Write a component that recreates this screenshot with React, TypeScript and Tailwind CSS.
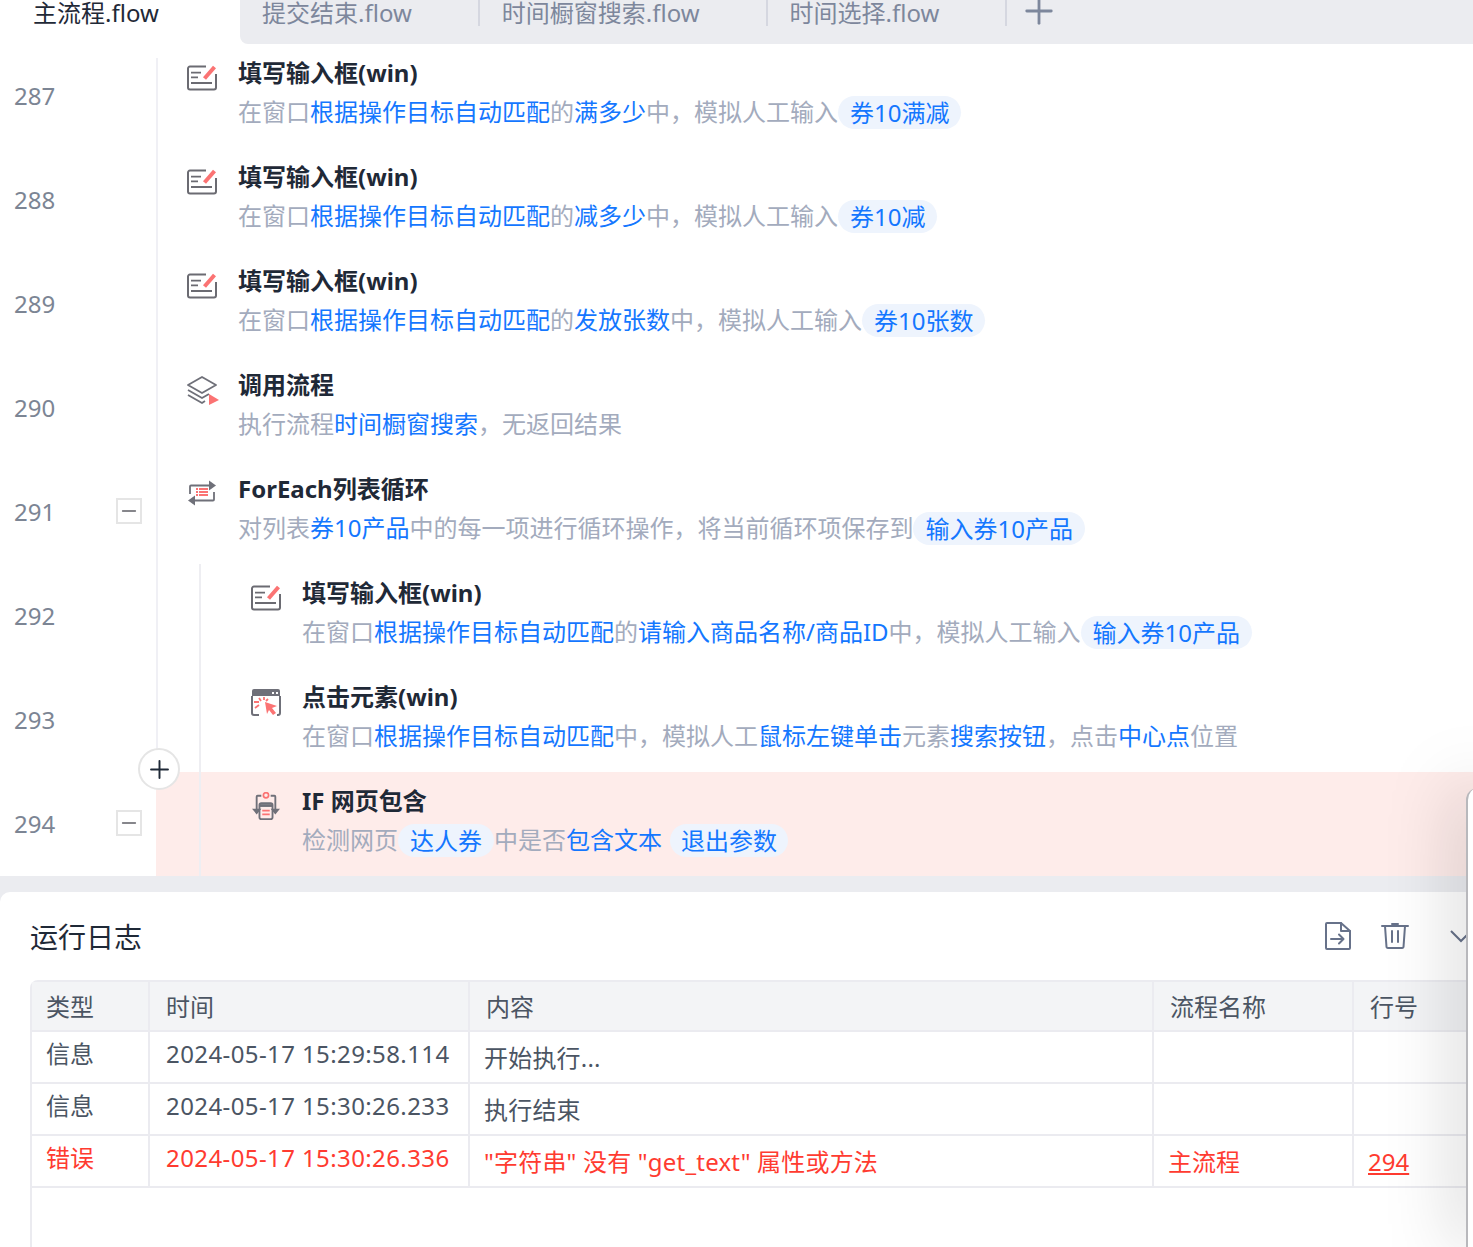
import { Minus, Plus } from 'lucide-react'

type Seg = { k: 't' | 'b' | 'c' | 'g'; s: string }
const t = (s: string): Seg => ({ k: 't', s })
const b = (s: string): Seg => ({ k: 'b', s })
const c = (s: string): Seg => ({ k: 'c', s })
const g = (s: string): Seg => ({ k: 'g', s })

const FONT = "font-['Noto_Sans','Noto_Sans_CJK_SC',sans-serif]"

function EditIcon() {
  return (
    <svg width="30" height="30" viewBox="0 0 30 30" fill="none">
      <path d="M19 3.500H3a2 2 0 0 0-2 2v19a2 2 0 0 0 2 2h24a2 2 0 0 0 2-2V11" stroke="#6b6b72" strokeWidth="2" />
      <path d="M4 9.700h10M4 14.300h7M4 20h21" stroke="#6b6b72" strokeWidth="1.800" />
      <path d="M17.500 15.500L27.500 4" stroke="#fb7373" strokeWidth="4" />
    </svg>
  )
}

function FlowIcon() {
  return (
    <svg width="32" height="32" viewBox="0 0 32 32" fill="none">
      <path d="M15 2L29 10 15 18 1 10z" stroke="#6f7079" strokeWidth="1.800" strokeLinejoin="round" />
      <path d="M1 15l14 8 7-4M1 20l14 8 3-2" stroke="#6f7079" strokeWidth="1.800" strokeLinejoin="round" />
      <path d="M22 19l10 6-10 5z" fill="#fb7373" />
    </svg>
  )
}

function LoopIcon() {
  return (
    <svg width="30" height="30" viewBox="0 0 30 30" fill="none">
      <path d="M3 15V7.500a1 1 0 0 1 1-1h22" stroke="#6f7079" strokeWidth="1.800" />
      <path d="M22 1.500l7 5-7 5z" fill="#6f7079" />
      <path d="M27 13v7.500a1 1 0 0 1-1 1H5" stroke="#6f7079" strokeWidth="1.800" />
      <path d="M8 16.500l-7 5 7 5z" fill="#6f7079" />
      <path d="M9 9h2v2H9zM9 12h2v2H9zM9 15h2v2H9zM12 9h9v2h-9zM12 12h9v2h-9zM12 15h9v2h-9z" fill="#fb7373" />
    </svg>
  )
}

function ClickIcon() {
  return (
    <svg width="30" height="30" viewBox="0 0 30 30" fill="none">
      <path d="M3 2h24a2 2 0 0 1 2 2v5H1V4a2 2 0 0 1 2-2z" fill="#6f7079" />
      <path d="M21 5h2v2h-2zM25 5h2v2h-2z" fill="#fff" />
      <path d="M1 9v17a2 2 0 0 0 2 2h5M29 9v17a2 2 0 0 1-2 2h-1" stroke="#6f7079" strokeWidth="2" />
      <path d="M14 15l12 4-5 2 4 5-3 2-4-5-2 4z" fill="#fb7373" />
      <path d="M8 11l2 3M13 10v3M3 15h5M4 21l4-3M17 12l-2 2" stroke="#fb7373" strokeWidth="1.800" />
    </svg>
  )
}

function IfIcon() {
  return (
    <svg className="ml-[1px] mt-[1px]" width="28" height="28" viewBox="0 0 30 30" fill="none">
      <circle cx="15" cy="3.500" r="2.800" stroke="#fb7373" strokeWidth="1.800" />
      <path d="M10 4H6a1 1 0 0 0-1 1v14M20 4h4a1 1 0 0 1 1 1v14" stroke="#6f7079" strokeWidth="2" />
      <path d="M0 18h10l-5 6zM20 18h10l-5 6z" fill="#6f7079" />
      <rect x="8" y="12" width="14" height="17" rx="2" stroke="#6f7079" strokeWidth="2" />
      <path d="M8 14.500h14" stroke="#6f7079" strokeWidth="3" />
      <path d="M11 20h8M11 24h8" stroke="#fb7373" strokeWidth="1.800" />
    </svg>
  )
}

const rows = [
  { n: 287, icon: <EditIcon />, title: '填写输入框(win)', depth: 0, desc: [t('在窗口'), b('根据操作目标自动匹配'), t('的'), b('满多少'), t('中，模拟人工输入'), c('券10满减')] },
  { n: 288, icon: <EditIcon />, title: '填写输入框(win)', depth: 0, desc: [t('在窗口'), b('根据操作目标自动匹配'), t('的'), b('减多少'), t('中，模拟人工输入'), c('券10减')] },
  { n: 289, icon: <EditIcon />, title: '填写输入框(win)', depth: 0, desc: [t('在窗口'), b('根据操作目标自动匹配'), t('的'), b('发放张数'), t('中，模拟人工输入'), c('券10张数')] },
  { n: 290, icon: <FlowIcon />, title: '调用流程', depth: 0, desc: [t('执行流程'), b('时间橱窗搜索'), t('，无返回结果')] },
  { n: 291, icon: <LoopIcon />, title: 'ForEach列表循环', depth: 0, fold: true, desc: [t('对列表'), b('券10产品'), t('中的每一项进行循环操作，将当前循环项保存到'), c('输入券10产品')] },
  { n: 292, icon: <EditIcon />, title: '填写输入框(win)', depth: 1, desc: [t('在窗口'), b('根据操作目标自动匹配'), t('的'), b('请输入商品名称/商品ID'), t('中，模拟人工输入'), c('输入券10产品')] },
  { n: 293, icon: <ClickIcon />, title: '点击元素(win)', depth: 1, desc: [t('在窗口'), b('根据操作目标自动匹配'), t('中，模拟人工'), b('鼠标左键单击'), t('元素'), b('搜索按钮'), t('，点击'), b('中心点'), t('位置')] },
  { n: 294, icon: <IfIcon />, title: 'IF 网页包含', depth: 1, fold: true, error: true, desc: [t('检测网页'), c('达人券'), t('中是否'), b('包含文本'), g('退出参数')] },
]

function Desc({ segs }: { segs: Seg[] }) {
  return (
    <div className="text-[24px] leading-[40px] whitespace-nowrap text-[#a3abbd]">
      {segs.map((seg, i) => {
        if (seg.k === 'b') return <span key={i} className="text-[#1477ff]">{seg.s}</span>
        if (seg.k === 'c') {
          return (
            <span key={i} className="inline-block align-top mt-[4px] h-[33px] px-[12px] rounded-full bg-[#eef4fd] text-[#1477ff] leading-[34px]">
              {seg.s}
            </span>
          )
        }
        if (seg.k === 'g') {
          return (
            <span key={i} className="inline-block align-top ml-[8px] mt-[4px] h-[33px] px-[11px] rounded-full bg-[#eef4fd] text-[#1477ff] leading-[34px]">
              {seg.s}
            </span>
          )
        }
        return <span key={i}>{seg.s}</span>
      })}
    </div>
  )
}

function FlowRow({ row }: { row: (typeof rows)[number] }) {
  return (
    <div className="flex h-[104px] shrink-0">
      <div className="w-[156px] shrink-0 flex items-center justify-between pb-[2px] pl-[14px] pr-[14px] text-[24px] text-[#7c8594]">
        <span className="translate-y-[1px]">{row.n}</span>
        {row.fold && (
          <span className="w-[26px] h-[26px] border-2 border-[#e5e5e5] flex items-center justify-center text-[#5f5f66]">
            <Minus size={24} strokeWidth={1.6} />
          </span>
        )}
      </div>
      <div className={`flex-1 flex border-l-2 ${row.error ? 'bg-[#feecea] border-[#feecea]' : 'border-[#f0f0f5]'}`}>
        {row.depth > 0 && <div className="w-[43px] shrink-0 border-r-2 border-[#eeeef2]" />}
        <div className={`${row.depth > 0 ? 'pl-[50px]' : 'pl-[29px]'} pt-[19px] w-[50px] shrink-0 box-content`}>
          {row.icon}
        </div>
        <div className="pl-[1px] pt-[11px]">
          <div className="text-[24px] leading-[36px] mb-[1px] font-bold text-[#1f2937]">{row.title}</div>
          <Desc segs={row.desc} />
        </div>
      </div>
    </div>
  )
}

const logs = [
  { type: '信息', time: '2024-05-17 15:29:58.114', msg: '开始执行...', flow: '', line: '' },
  { type: '信息', time: '2024-05-17 15:30:26.233', msg: '执行结束', flow: '', line: '' },
  { type: '错误', time: '2024-05-17 15:30:26.336', msg: '"字符串" 没有 "get_text" 属性或方法', flow: '主流程', line: '294', error: true },
]

const tabs = ['提交结束.flow', '时间橱窗搜索.flow', '时间选择.flow']
const cols = 'grid grid-cols-[118px_320px_684px_200px_1fr]'

export default function App() {
  return (
    <div className={`relative w-[1473px] h-[1247px] overflow-hidden flex flex-col bg-white ${FONT}`}>
      <div className="flex h-[44px] shrink-0">
        <div className="w-[240px] pl-[33px] text-[24px] leading-[26px] text-[#1f2937]">主流程.flow</div>
        <div className="flex-1 flex items-start bg-[#ebecf0] rounded-bl-[8px]">
          {tabs.map((name) => (
            <div key={name} className="h-[26px] pl-[22px] pr-[66px] border-r-2 border-[#d5d7e0] text-[24px] leading-[26px] text-[#7d879c] whitespace-nowrap">
              {name}
            </div>
          ))}
          <Plus size={42} strokeWidth={1.6} className="ml-[11px] -mt-[10px] text-[#7d879c]" />
        </div>
      </div>

      <div className="relative h-[832px] shrink-0 pt-[14px]">
        <div className="h-[818px] overflow-hidden">
          <div className="-mt-[14px] flex flex-col">
            {rows.map((row) => (
              <FlowRow key={row.n} row={row} />
            ))}
          </div>
        </div>
        <span className="absolute left-[138px] top-[704px] w-[42px] h-[42px] rounded-full border-2 border-[#e5e5e5] bg-white flex items-center justify-center text-[#1f2937]">
          <Plus size={29} strokeWidth={1.6} />
        </span>
      </div>

      <div className="flex-1 bg-[#ebecf0] pt-[16px] flex flex-col min-h-0">
        <div className="flex-1 bg-white rounded-tl-[10px] flex flex-col min-h-0">
          <div className="h-[88px] shrink-0 flex items-center pl-[30px] pr-[1px]">
            <span className="text-[28px] text-[#1f2937] mt-[2px]">运行日志</span>
            <svg className="ml-auto" width="28" height="30" viewBox="0 0 28 30" fill="none" stroke="#67728a" strokeWidth="2" strokeLinejoin="round" strokeLinecap="round">
              <path d="M3 2h14l9 8v17a1 1 0 0 1-1 1H3a1 1 0 0 1-1-1V3a1 1 0 0 1 1-1z" />
              <path d="M17 2v8h9" />
              <path d="M7 18h12M15 13.500l4.500 4.500-4.500 4.500" />
            </svg>
            <svg className="ml-[29px]" width="28" height="28" viewBox="0 0 28 28" fill="none" stroke="#67728a" strokeWidth="2" strokeLinecap="round" strokeLinejoin="round">
              <path d="M1 4h26M11 2h6" />
              <path d="M4 4l1.500 21a2 2 0 0 0 2 1h13a2 2 0 0 0 2-1L24 4" />
              <path d="M11 9v11M17 9v11" />
            </svg>
            <svg className="ml-[41px]" width="22" height="14" viewBox="0 0 22 14" fill="none" stroke="#67728a" strokeWidth="2">
              <path d="M1 2l10 10 10-10" />
            </svg>
          </div>

          <div className="ml-[30px] flex-1 border-l-2 border-t-2 border-[#ebebf0] rounded-tl-[8px] text-[24px]">
            <div className={`${cols} h-[50px] bg-[#f3f4f6] border-b-2 border-[#ebebf0] text-[#4b5563]`}>
              <div className="pl-[14px] border-r-2 border-[#ebebf0] leading-[49px]">类型</div>
              <div className="pl-[16px] border-r-2 border-[#ebebf0] leading-[49px]">时间</div>
              <div className="pl-[16px] border-r-2 border-[#ebebf0] leading-[49px]">内容</div>
              <div className="pl-[16px] border-r-2 border-[#ebebf0] leading-[49px]">流程名称</div>
              <div className="pl-[16px] leading-[49px]">行号</div>
            </div>
            {logs.map((log) => (
              <div key={log.time} className={`${cols} h-[52px] border-b-2 border-[#ebebf0] ${log.error ? 'text-[#ff3b30]' : 'text-[#4b5563]'}`}>
                <div className="pl-[14px] border-r-2 border-[#ebebf0] leading-[44px]">{log.type}</div>
                <div className="pl-[16px] border-r-2 border-[#ebebf0] leading-[44px] tracking-[0.4px]">{log.time}</div>
                <div className="pl-[14px] border-r-2 border-[#ebebf0] leading-[52px] tracking-[0.2px]">{log.msg}</div>
                <div className="pl-[14px] border-r-2 border-[#ebebf0] leading-[52px]">{log.flow}</div>
                <div className="pl-[14px] leading-[52px] underline">{log.line}</div>
              </div>
            ))}
          </div>
        </div>
      </div>

      <div className="absolute left-[1466px] top-[788px] bottom-0 w-[20px] bg-white border-l-2 border-[#b8b8bc] rounded-tl-[12px] shadow-[0_0_70px_rgba(0,0,0,0.35)]" />
    </div>
  )
}
